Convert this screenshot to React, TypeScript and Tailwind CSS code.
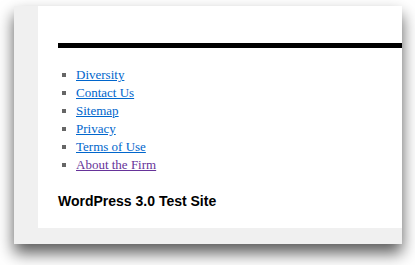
import React from "react";

const links = [
  { label: "Diversity", visited: false },
  { label: "Contact Us", visited: false },
  { label: "Sitemap", visited: false },
  { label: "Privacy", visited: false },
  { label: "Terms of Use", visited: false },
  { label: "About the Firm", visited: true },
];

export default function App() {
  return (
    <div className="min-h-screen bg-white pt-[6px] pl-[14px]">
      <div className="w-[388px] h-[238px] bg-[#f0f0f0] pl-[24px] pb-[16px] shadow-[0_9px_15px_rgba(0,0,0,0.65)]">
        <div className="h-full bg-white pt-[37px] pl-[20px] overflow-hidden">
          <div className="h-[5px] bg-black" />
          <ul className="mt-[18px] font-['Liberation_Serif',serif] text-[13px] leading-[18px]">
            {links.map((l) => (
              <li key={l.label} className="flex items-center">
                <span className="ml-[4px] mr-[10px] w-[4px] h-[4px] bg-[#666]" />
                <a
                  href="#"
                  className={
                    l.visited
                      ? "underline text-[#663399]"
                      : "underline text-[#0066cc]"
                  }
                >
                  {l.label}
                </a>
              </li>
            ))}
          </ul>
          <h3 className="mt-[18px] font-['Liberation_Sans',Arial,sans-serif] font-bold text-[14px] leading-[18px] text-black">
            WordPress 3.0 Test Site
          </h3>
        </div>
      </div>
    </div>
  );
}
